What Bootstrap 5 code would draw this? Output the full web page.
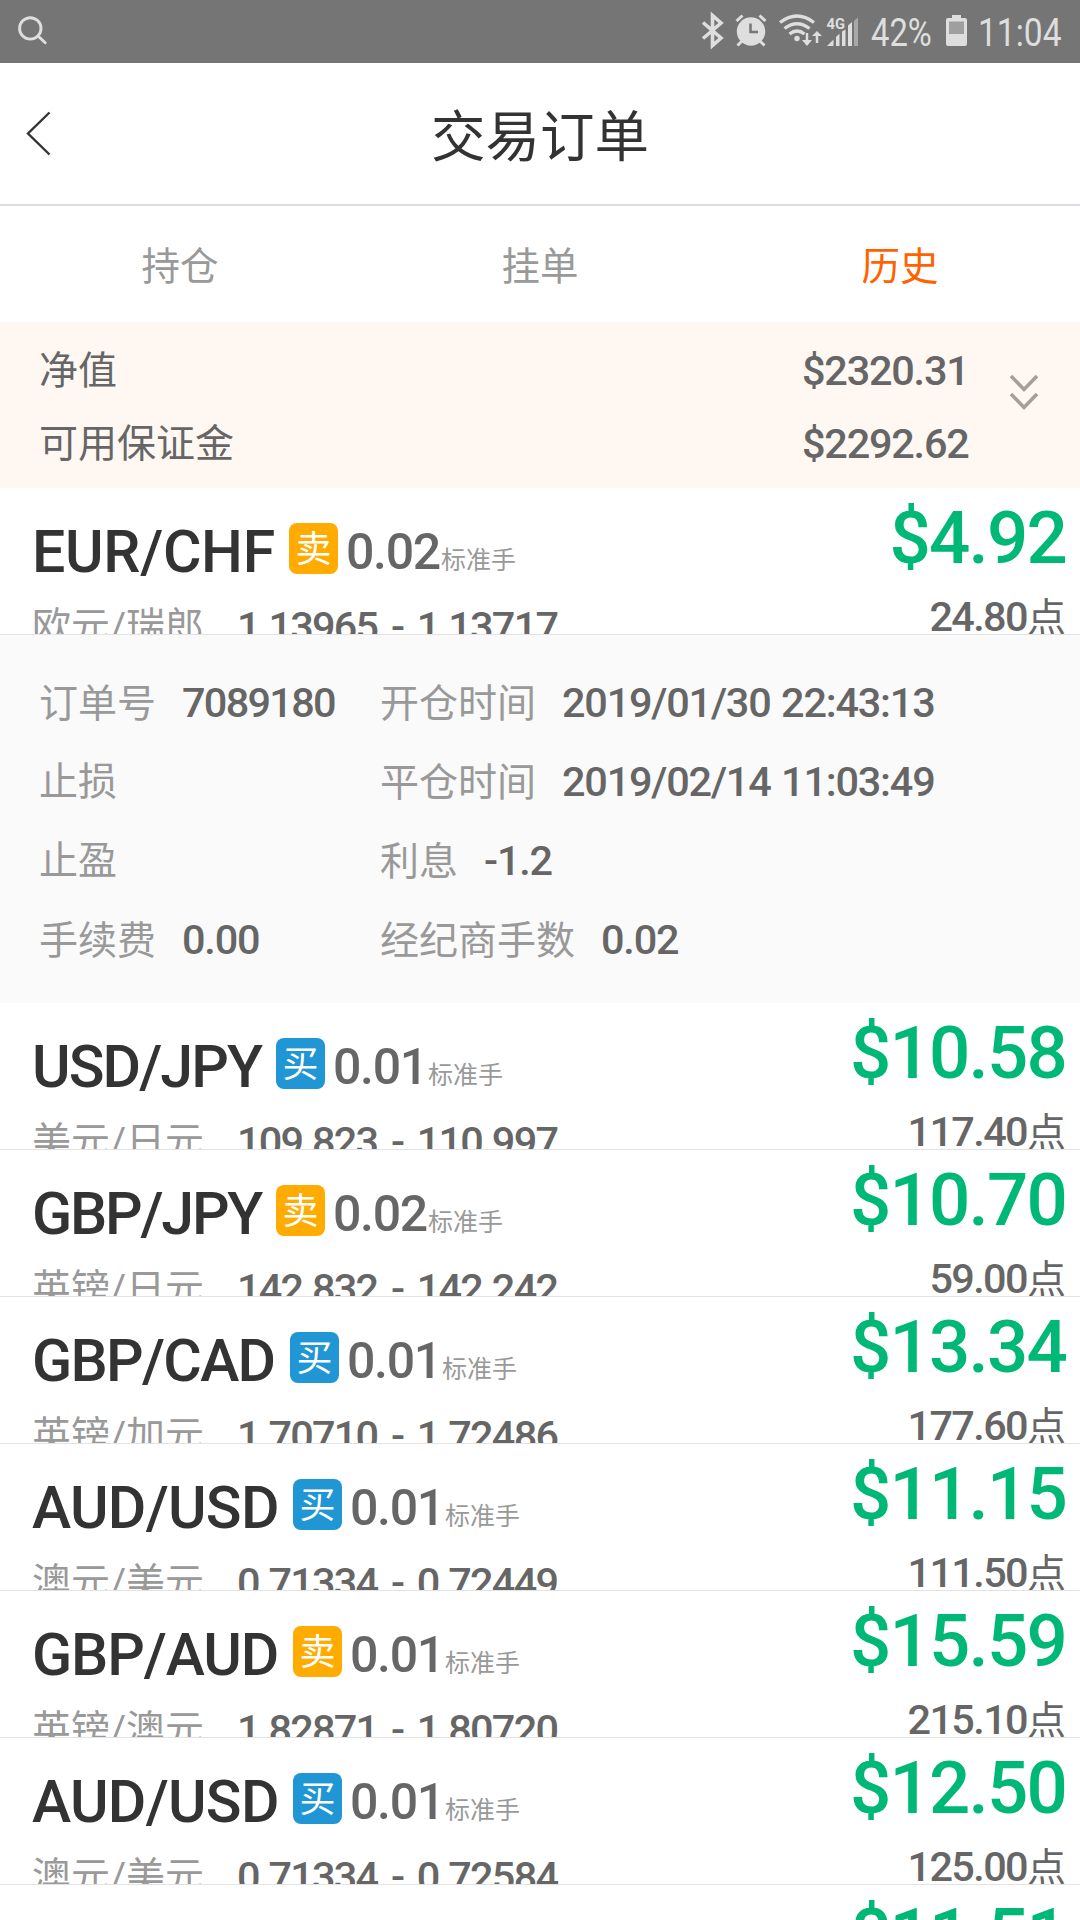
<!DOCTYPE html>
<html lang="zh-CN">
<head>
<meta charset="utf-8">
<meta name="viewport" content="width=device-width, initial-scale=1">
<title>交易订单</title>
<link href="https://cdn.jsdelivr.net/npm/bootstrap@5.3.0/dist/css/bootstrap.min.css" rel="stylesheet">
<style>
  body { font-family: Roboto, "Noto Sans CJK SC", sans-serif; background: #fff; color: #666; height: 1920px; overflow: hidden; font-size: 39px; }
  .statusbar { height: 63px; background: #757575; color: #dedede; padding: 0 20px 0 18px; }
  .status-icons { height: 63px; }
  .status-text { font-size: 39.5px; line-height: 65px; white-space: nowrap; display: inline-block; transform-origin: 0 50%; }
  .pct { width: 62px; transform: scaleX(.83); margin-right: 12px; }
  .clock { width: 82px; transform: scaleX(.85); margin-left: 9px; }
  .titlebar { height: 143px; border-bottom: 2px solid #dcdce2; color: #333; }
  .titlebar svg { width: 80px; }
  .titlebar h1 { font-size: 54.5px; line-height: 148px; }
  .tabs { height: 116px; }
  .tabs .nav-link { font-size: 38.5px; line-height: 122px; color: #999; }
  .tabs .nav-link.active { color: #ff6200; }
  .summary { height: 166px; background: #fff8f2; padding: 13px 0 7px 39px; }
  .summary-line { line-height: 73px; height: 73px; }
  .num { font-size: 41.4px; font-weight: 500; letter-spacing: -1.2px; }
  .summary-values { width: 169px; }
  .chev { width: 109px; }
  .order { height: 147px; border-bottom: 1px solid #e3e3e3; overflow: hidden; padding: 0 15px 0 32px; }
  .order-last { height: 35px; border-bottom: 0; }
  .order-head { height: 84px; margin-top: 20px; }
  .pair { font-size: 59px; font-weight: 500; line-height: 88px; color: #333; white-space: nowrap; }
  .pair-eurchf { width: 257px; letter-spacing: -.3px; }
  .pair-usdjpy { width: 244px; letter-spacing: -1.9px; }
  .pair-gbpjpy { width: 244px; letter-spacing: -2.2px; }
  .pair-gbpcad { width: 258px; letter-spacing: -1.7px; }
  .pair-audusd { width: 261px; letter-spacing: -.7px; }
  .pair-gbpaud { width: 261px; letter-spacing: -1.1px; }
  .side { width: 49px; height: 51px; border-radius: 8px; font-size: 36px; line-height: 54px; color: #fff; margin-top: 15px; text-align: center; }
  .sell { background: #ffab00; }
  .buy { background: #2196d5; }
  .lots { font-size: 50px; font-weight: 500; line-height: 88px; letter-spacing: -1.3px; margin-left: 8px; width: 95px; white-space: nowrap; }
  .unit { font-size: 25px; line-height: 106px; color: #999; }
  .order-sub { height: 71px; line-height: 71px; }
  .order-sub .num { letter-spacing: -1.75px; word-spacing: 5px; line-height: 70px; }
  .cname { width: 205px; color: #999; white-space: nowrap; }
  .profit { font-size: 72.7px; font-weight: 500; line-height: 102px; height: 99px; color: #00b876; letter-spacing: -1.8px; margin-right: -1px; }
  .points { line-height: 60px; margin-right: -1px; }
  .points .num { letter-spacing: -1.6px; }
  .details { height: 368px; background: #fafafa; padding: 29px 0 23px 39px; color: #999; }
  .detail-line { height: 79px; line-height: 79px; white-space: nowrap; }
  .details .num { color: #666; margin-left: 26px; letter-spacing: -1.2px; word-spacing: 1.5px; }
  .details .order-no { letter-spacing: -1.7px; }
  .dcol { width: 341px; }
</style>
<script src="https://cdn.jsdelivr.net/npm/bootstrap@5.3.0/dist/js/bootstrap.bundle.min.js"></script>
</head>
<body>
<div class="statusbar d-flex justify-content-between">
  <svg width="36" height="63" viewBox="18 0 36 63" fill="none" stroke="#dedede" stroke-width="2.9" stroke-linecap="round"><circle cx="30.3" cy="28.4" r="10.7"/><path d="M38 36l7.2 6.8"/></svg>
  <div class="d-flex">
    <svg class="status-icons" width="171" viewBox="700 0 171 63" fill="none" stroke="#dedede">
      <path d="M703 22.500l18 15.500-8.500 7.500v-30l8.500 7.500L703 38.500" stroke-width="3.600"/>
      <circle cx="751" cy="31.500" r="14.200" fill="#dedede" stroke="none"/>
      <path d="M736.500 21l6-5.500M765.500 21l-6-5.500M742 41l-4.500 4.500M760 41l4.500 4.500" stroke-width="3"/>
      <path d="M750.500 23.500v8.500h7.500" stroke="#757575" stroke-width="2.500"/>
      <path d="M780 22.500q17-13 34 0M784.500 28.500q12.500-9.500 25 0M789.500 34q7.500-6 15 0" stroke-width="3.300"/>
      <circle cx="797" cy="38.500" r="2.700" fill="#dedede" stroke="none"/>
      <path d="M807 33v9M817 43v-9" stroke-width="2.500"/>
      <path d="M802 40h10l-5 6zM812 36h10l-5-5z" fill="#dedede" stroke="none"/>
      <text x="826.500" y="29" font-size="15.500" font-weight="700" fill="#dedede" stroke="none" textLength="18.500" lengthAdjust="spacingAndGlyphs">4G</text>
      <g fill="#dedede" stroke="none"><path d="M827 46l6.500-6.500V46z"/><path d="M836 46v-9l3.500-3.500V46zM842 46V31.500l3.500-2V46zM848 46V25.500l4-3.500V46z"/><path d="M854 46V21l4-3.500V46z" fill="#a8a8a8"/></g>
    </svg>
    <span class="status-text pct">42%</span>
    <svg class="status-icons" width="24" viewBox="943 0 24 63"><path d="M950 15h9v3h4q2 0 2 2v24q0 2-2 2h-17q-2 0-2-2V20q0-2 2-2h4z" fill="#dedede"/><path d="M947 21.500h15V34h-15z" fill="#9f9f9f"/></svg>
    <span class="status-text clock">11:04</span>
  </div>
</div>
<header class="titlebar d-flex align-items-start">
  <svg height="141" viewBox="0 63 80 141" fill="none" stroke="#333" stroke-width="2.400"><path d="M49.500 112.500L28 133.500l21.500 21"/></svg>
  <h1 class="flex-fill text-center fw-normal m-0">交易订单</h1>
  <span class="px-4 mx-3"></span>
</header>
<nav class="tabs nav nav-fill flex-nowrap">
  <a class="nav-link p-0 w-100" href="#">持仓</a>
  <a class="nav-link p-0 w-100" href="#">挂单</a>
  <a class="nav-link p-0 w-100 active" href="#">历史</a>
</nav>
<section class="summary d-flex">
  <div class="flex-fill"><div class="summary-line">净值</div><div class="summary-line">可用保证金</div></div>
  <div class="summary-values"><div class="summary-line num">$2320.31</div><div class="summary-line num">$2292.62</div></div>
  <svg class="chev" height="146" viewBox="971 336 109 146" fill="none" stroke="#a3a09c" stroke-width="3.600"><path d="M1011 377l13 13.500 13-13.500M1011 395l13 13.500 13-13.500"/></svg>
</section>
<main>
  <article class="order d-flex justify-content-between">
    <div>
      <div class="order-head d-flex"><span class="pair pair-eurchf">EUR/CHF</span><span class="side sell">卖</span><span class="lots">0.02</span><span class="unit">标准手</span></div>
      <div class="order-sub d-flex"><span class="cname">欧元/瑞郎</span><span class="num">1.13965 - 1.13717</span></div>
    </div>
    <div class="text-end"><div class="profit">$4.92</div><div class="points"><span class="num">24.80</span>点</div></div>
  </article>
  <section class="details d-flex">
    <div class="dcol"><div class="detail-line">订单号<span class="num order-no">7089180</span></div><div class="detail-line">止损</div><div class="detail-line">止盈</div><div class="detail-line">手续费<span class="num">0.00</span></div></div>
    <div><div class="detail-line">开仓时间<span class="num">2019/01/30 22:43:13</span></div><div class="detail-line">平仓时间<span class="num">2019/02/14 11:03:49</span></div><div class="detail-line">利息<span class="num">-1.2</span></div><div class="detail-line">经纪商手数<span class="num">0.02</span></div></div>
  </section>
  <article class="order d-flex justify-content-between">
    <div>
      <div class="order-head d-flex"><span class="pair pair-usdjpy">USD/JPY</span><span class="side buy">买</span><span class="lots">0.01</span><span class="unit">标准手</span></div>
      <div class="order-sub d-flex"><span class="cname">美元/日元</span><span class="num">109.823 - 110.997</span></div>
    </div>
    <div class="text-end"><div class="profit">$10.58</div><div class="points"><span class="num">117.40</span>点</div></div>
  </article>
  <article class="order d-flex justify-content-between">
    <div>
      <div class="order-head d-flex"><span class="pair pair-gbpjpy">GBP/JPY</span><span class="side sell">卖</span><span class="lots">0.02</span><span class="unit">标准手</span></div>
      <div class="order-sub d-flex"><span class="cname">英镑/日元</span><span class="num">142.832 - 142.242</span></div>
    </div>
    <div class="text-end"><div class="profit">$10.70</div><div class="points"><span class="num">59.00</span>点</div></div>
  </article>
  <article class="order d-flex justify-content-between">
    <div>
      <div class="order-head d-flex"><span class="pair pair-gbpcad">GBP/CAD</span><span class="side buy">买</span><span class="lots">0.01</span><span class="unit">标准手</span></div>
      <div class="order-sub d-flex"><span class="cname">英镑/加元</span><span class="num">1.70710 - 1.72486</span></div>
    </div>
    <div class="text-end"><div class="profit">$13.34</div><div class="points"><span class="num">177.60</span>点</div></div>
  </article>
  <article class="order d-flex justify-content-between">
    <div>
      <div class="order-head d-flex"><span class="pair pair-audusd">AUD/USD</span><span class="side buy">买</span><span class="lots">0.01</span><span class="unit">标准手</span></div>
      <div class="order-sub d-flex"><span class="cname">澳元/美元</span><span class="num">0.71334 - 0.72449</span></div>
    </div>
    <div class="text-end"><div class="profit">$11.15</div><div class="points"><span class="num">111.50</span>点</div></div>
  </article>
  <article class="order d-flex justify-content-between">
    <div>
      <div class="order-head d-flex"><span class="pair pair-gbpaud">GBP/AUD</span><span class="side sell">卖</span><span class="lots">0.01</span><span class="unit">标准手</span></div>
      <div class="order-sub d-flex"><span class="cname">英镑/澳元</span><span class="num">1.82871 - 1.80720</span></div>
    </div>
    <div class="text-end"><div class="profit">$15.59</div><div class="points"><span class="num">215.10</span>点</div></div>
  </article>
  <article class="order d-flex justify-content-between">
    <div>
      <div class="order-head d-flex"><span class="pair pair-audusd">AUD/USD</span><span class="side buy">买</span><span class="lots">0.01</span><span class="unit">标准手</span></div>
      <div class="order-sub d-flex"><span class="cname">澳元/美元</span><span class="num">0.71334 - 0.72584</span></div>
    </div>
    <div class="text-end"><div class="profit">$12.50</div><div class="points"><span class="num">125.00</span>点</div></div>
  </article>
  <article class="order order-last d-flex justify-content-end">
    <div class="text-end"><div class="profit">$11.51</div></div>
  </article>
</main>
</body>
</html>
